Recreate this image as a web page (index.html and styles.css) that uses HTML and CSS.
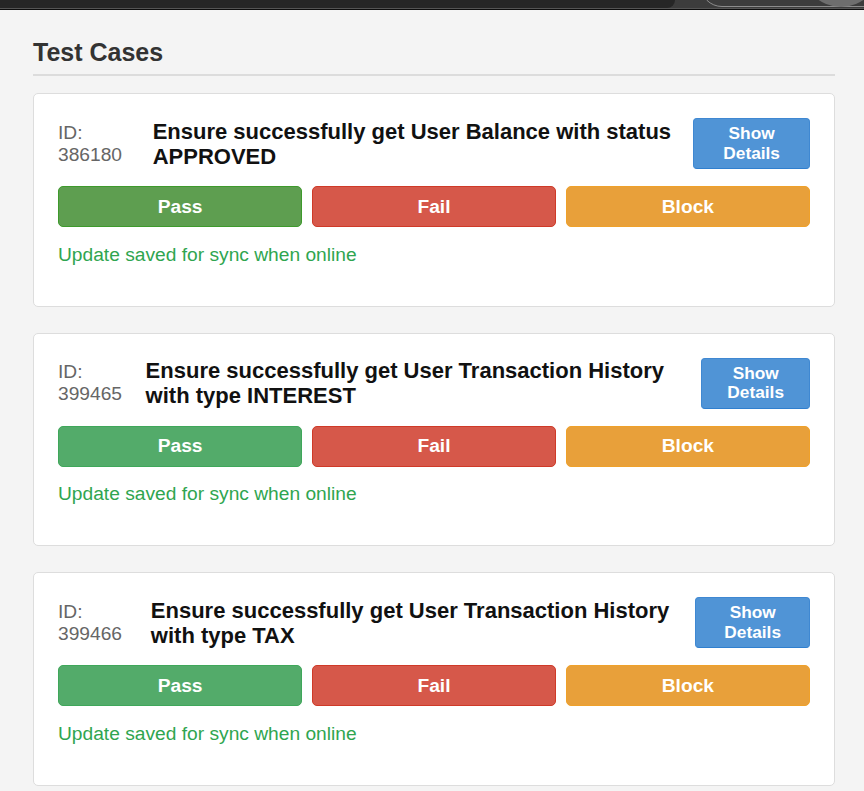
FILE: index.html
```html
<!DOCTYPE html>
<html lang="en">
<head>
<meta charset="utf-8">
<title>Test Cases</title>
<link rel="stylesheet" href="styles.css">
</head>
<body>
<div class="chrome">
  <div class="chrome-bar">
    <div class="chrome-tab"></div>
    <div class="chrome-pill"></div>
    <div class="chrome-avatar"></div>
  </div>
</div>
<main class="page">
  <h2 class="page-title">Test Cases</h2>

  <section class="case">
    <div class="case-header">
      <span class="case-id">ID: 386180</span>
      <h3 class="case-title">Ensure successfully get User Balance with status APPROVED</h3>
      <button class="details-btn">Show Details</button>
    </div>
    <div class="case-actions">
      <button class="action pass pass-active">Pass</button>
      <button class="action fail">Fail</button>
      <button class="action block">Block</button>
    </div>
    <p class="case-status">Update saved for sync when online</p>
  </section>

  <section class="case">
    <div class="case-header">
      <span class="case-id">ID: 399465</span>
      <h3 class="case-title">Ensure successfully get User Transaction History with type INTEREST</h3>
      <button class="details-btn">Show Details</button>
    </div>
    <div class="case-actions">
      <button class="action pass">Pass</button>
      <button class="action fail">Fail</button>
      <button class="action block">Block</button>
    </div>
    <p class="case-status">Update saved for sync when online</p>
  </section>

  <section class="case">
    <div class="case-header">
      <span class="case-id">ID: 399466</span>
      <h3 class="case-title">Ensure successfully get User Transaction History with type TAX</h3>
      <button class="details-btn">Show Details</button>
    </div>
    <div class="case-actions">
      <button class="action pass">Pass</button>
      <button class="action fail">Fail</button>
      <button class="action block">Block</button>
    </div>
    <p class="case-status">Update saved for sync when online</p>
  </section>
</main>
</body>
</html>
```
FILE: styles.css
```css
* { box-sizing: border-box; }

html, body {
  margin: 0;
  padding: 0;
  background: #f4f4f4;
  font-family: "Liberation Sans", Arial, Helvetica, sans-serif;
  overflow: hidden;
}

.chrome {
  height: 10px;
  background: #0e0e0e;
}

.chrome-bar {
  position: relative;
  height: 9px;
  background: #3c3c3c;
  border-bottom: 1px solid #555555;
  overflow: hidden;
}

.chrome-tab {
  width: 675px;
  height: 8px;
  background: #262626;
  border-bottom-right-radius: 8px;
}

.chrome-pill {
  position: absolute;
  left: 700px;
  top: -40px;
  width: 320px;
  height: 47px;
  border: 1.5px solid #8c8c8c;
  border-radius: 22px;
}

.chrome-avatar {
  position: absolute;
  left: 802px;
  top: -71px;
  width: 78px;
  height: 78px;
  border-radius: 50%;
  background: #6e6e6e;
}

.page {
  padding: 28px 29px 0 33px;
}

.page-title {
  margin: 0 0 17px;
  padding-bottom: 7px;
  font-size: 25px;
  line-height: 29px;
  font-weight: bold;
  color: #333333;
  border-bottom: 2px solid #dcdcdc;
}

.case {
  background: #ffffff;
  border: 1px solid #dddddd;
  border-radius: 5px;
  padding: 24px;
  margin-bottom: 26px;
}

.case-header {
  display: flex;
  align-items: center;
  gap: 19px;
  margin-bottom: 17px;
}

.case-id {
  font-size: 19.2px;
  line-height: 22px;
  color: #666666;
}

.case-title {
  margin: 0;
  font-size: 22px;
  line-height: 25px;
  font-weight: bold;
  color: #111111;
}

.details-btn {
  font-family: inherit;
  font-size: 17.3px;
  line-height: 19.5px;
  font-weight: bold;
  color: #ffffff;
  background: #5094d6;
  border: 1px solid #3f88d2;
  border-bottom-color: #2f7fcf;
  border-radius: 4px;
  padding: 5px 14px;
}

.case-actions {
  display: grid;
  grid-template-columns: repeat(3, 1fr);
  gap: 9.6px;
}

.action {
  font-family: inherit;
  font-size: 19.2px;
  line-height: 22px;
  font-weight: bold;
  color: #ffffff;
  padding: 8.5px 0;
  border-radius: 5px;
  border: 1px solid transparent;
}

.pass {
  background: #53ab6a;
  border-color: #3fa75a;
}

.pass-active {
  background: #5e9e50;
  border-color: #3e9a2c;
}

.fail {
  background: #d6584a;
  border-color: #cf3a28;
}

.block {
  background: #e8a03a;
  border-color: #efa12a;
}

.case-status {
  margin: 16.5px 0 16px;
  font-size: 19.2px;
  line-height: 22px;
  color: #2fa54f;
}
```
